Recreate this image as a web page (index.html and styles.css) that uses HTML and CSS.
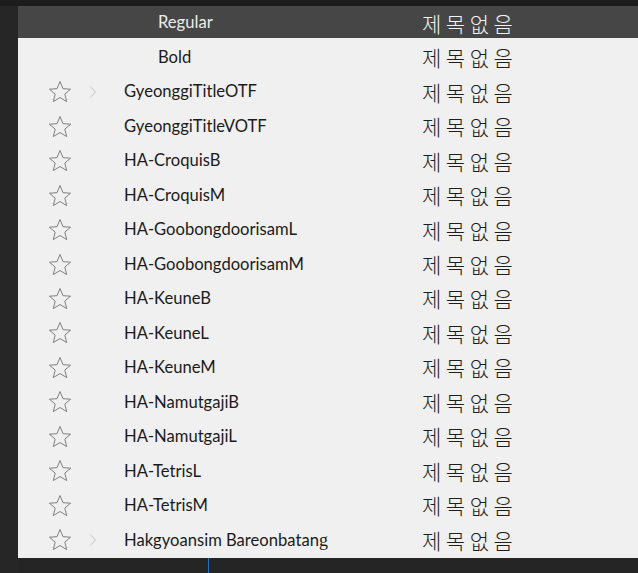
FILE: index.html
```html
<!DOCTYPE html>
<html lang="ko">
<head>
<meta charset="utf-8">
<link rel="stylesheet" href="styles.css">
</head>
<body>
<div class="frame">
  <div class="panel">
    <div class="row row-active">
      <span></span><span></span><span></span><span></span><span></span>
      <span class="name sub">Regular</span><span class="ko">제목없음</span>
    </div>
    <div class="row">
      <span></span><span></span><span></span><span></span><span></span>
      <span class="name sub">Bold</span><span class="ko">제목없음</span>
    </div>
    <div class="row">
      <span></span><svg class="star" viewBox="0 0 24 24"><path d="M12 1.5l3 7.2 7.6.5-5.8 4.9 1.9 7.5L12 17.5l-6.7 4.1 1.9-7.5-5.8-4.9 7.6-.5z"/></svg><span></span><svg class="chev" viewBox="0 0 6 12"><polyline points="0.5,0.5 5.5,6 0.5,11.5"/></svg><span></span>
      <span class="name">GyeonggiTitleOTF</span><span class="ko">제목없음</span>
    </div>
    <div class="row">
      <span></span><svg class="star" viewBox="0 0 24 24"><path d="M12 1.5l3 7.2 7.6.5-5.8 4.9 1.9 7.5L12 17.5l-6.7 4.1 1.9-7.5-5.8-4.9 7.6-.5z"/></svg><span></span><span></span><span></span>
      <span class="name">GyeonggiTitleVOTF</span><span class="ko">제목없음</span>
    </div>
    <div class="row">
      <span></span><svg class="star" viewBox="0 0 24 24"><path d="M12 1.5l3 7.2 7.6.5-5.8 4.9 1.9 7.5L12 17.5l-6.7 4.1 1.9-7.5-5.8-4.9 7.6-.5z"/></svg><span></span><span></span><span></span>
      <span class="name">HA-CroquisB</span><span class="ko">제목없음</span>
    </div>
    <div class="row">
      <span></span><svg class="star" viewBox="0 0 24 24"><path d="M12 1.5l3 7.2 7.6.5-5.8 4.9 1.9 7.5L12 17.5l-6.7 4.1 1.9-7.5-5.8-4.9 7.6-.5z"/></svg><span></span><span></span><span></span>
      <span class="name">HA-CroquisM</span><span class="ko">제목없음</span>
    </div>
    <div class="row">
      <span></span><svg class="star" viewBox="0 0 24 24"><path d="M12 1.5l3 7.2 7.6.5-5.8 4.9 1.9 7.5L12 17.5l-6.7 4.1 1.9-7.5-5.8-4.9 7.6-.5z"/></svg><span></span><span></span><span></span>
      <span class="name">HA-GoobongdoorisamL</span><span class="ko">제목없음</span>
    </div>
    <div class="row">
      <span></span><svg class="star" viewBox="0 0 24 24"><path d="M12 1.5l3 7.2 7.6.5-5.8 4.9 1.9 7.5L12 17.5l-6.7 4.1 1.9-7.5-5.8-4.9 7.6-.5z"/></svg><span></span><span></span><span></span>
      <span class="name">HA-GoobongdoorisamM</span><span class="ko">제목없음</span>
    </div>
    <div class="row">
      <span></span><svg class="star" viewBox="0 0 24 24"><path d="M12 1.5l3 7.2 7.6.5-5.8 4.9 1.9 7.5L12 17.5l-6.7 4.1 1.9-7.5-5.8-4.9 7.6-.5z"/></svg><span></span><span></span><span></span>
      <span class="name">HA-KeuneB</span><span class="ko">제목없음</span>
    </div>
    <div class="row">
      <span></span><svg class="star" viewBox="0 0 24 24"><path d="M12 1.5l3 7.2 7.6.5-5.8 4.9 1.9 7.5L12 17.5l-6.7 4.1 1.9-7.5-5.8-4.9 7.6-.5z"/></svg><span></span><span></span><span></span>
      <span class="name">HA-KeuneL</span><span class="ko">제목없음</span>
    </div>
    <div class="row">
      <span></span><svg class="star" viewBox="0 0 24 24"><path d="M12 1.5l3 7.2 7.6.5-5.8 4.9 1.9 7.5L12 17.5l-6.7 4.1 1.9-7.5-5.8-4.9 7.6-.5z"/></svg><span></span><span></span><span></span>
      <span class="name">HA-KeuneM</span><span class="ko">제목없음</span>
    </div>
    <div class="row">
      <span></span><svg class="star" viewBox="0 0 24 24"><path d="M12 1.5l3 7.2 7.6.5-5.8 4.9 1.9 7.5L12 17.5l-6.7 4.1 1.9-7.5-5.8-4.9 7.6-.5z"/></svg><span></span><span></span><span></span>
      <span class="name">HA-NamutgajiB</span><span class="ko">제목없음</span>
    </div>
    <div class="row">
      <span></span><svg class="star" viewBox="0 0 24 24"><path d="M12 1.5l3 7.2 7.6.5-5.8 4.9 1.9 7.5L12 17.5l-6.7 4.1 1.9-7.5-5.8-4.9 7.6-.5z"/></svg><span></span><span></span><span></span>
      <span class="name">HA-NamutgajiL</span><span class="ko">제목없음</span>
    </div>
    <div class="row">
      <span></span><svg class="star" viewBox="0 0 24 24"><path d="M12 1.5l3 7.2 7.6.5-5.8 4.9 1.9 7.5L12 17.5l-6.7 4.1 1.9-7.5-5.8-4.9 7.6-.5z"/></svg><span></span><span></span><span></span>
      <span class="name">HA-TetrisL</span><span class="ko">제목없음</span>
    </div>
    <div class="row">
      <span></span><svg class="star" viewBox="0 0 24 24"><path d="M12 1.5l3 7.2 7.6.5-5.8 4.9 1.9 7.5L12 17.5l-6.7 4.1 1.9-7.5-5.8-4.9 7.6-.5z"/></svg><span></span><span></span><span></span>
      <span class="name">HA-TetrisM</span><span class="ko">제목없음</span>
    </div>
    <div class="row">
      <span></span><svg class="star" viewBox="0 0 24 24"><path d="M12 1.5l3 7.2 7.6.5-5.8 4.9 1.9 7.5L12 17.5l-6.7 4.1 1.9-7.5-5.8-4.9 7.6-.5z"/></svg><span></span><svg class="chev" viewBox="0 0 6 12"><polyline points="0.5,0.5 5.5,6 0.5,11.5"/></svg><span></span>
      <span class="name">Hakgyoansim Bareonbatan<span class="serif">g</span></span><span class="ko">제목없음</span>
    </div>
  </div>
  <div class="footer"><span class="cursor"></span></div>
</div>
</body>
</html>
```
FILE: styles.css
```css
html, body {
  margin: 0;
  padding: 0;
  background: #1f1f1f;
  height: 100%;
  overflow: hidden;
}
.frame {
  padding-top: 6px;
  padding-left: 18px;
  background: #262626;
  box-shadow: inset 0 6px 0 #1c1c1c;
  height: 573px;
  box-sizing: border-box;
}
.panel {
  background: #f0f0f0;
  display: flex;
  flex-direction: column;
}
.row {
  height: 34.47px;
  display: grid;
  grid-template-columns: 30px 24px 18px 6px 28px 298px 1fr;
  align-items: center;
  font-family: "Lato", "Open Sans", sans-serif;
  font-size: 16.6px;
  color: #1b1b1b;
}
.row-active {
  background: linear-gradient(#464646 0 32px, #f0f0f0 32px);
  color: #ececec;
}
.row-active .ko { color: #f2f2f2; }
.name {
  white-space: nowrap;
  line-height: 1;
  padding-bottom: 1px;
}
.name.sub { padding-left: 34px; }
.serif { font-family: "Liberation Serif", serif; font-size: 18px; }
.ko {
  font-family: "Noto Sans CJK KR", sans-serif;
  font-weight: 300;
  font-size: 21px;
  letter-spacing: 4.5px;
  line-height: 1;
  color: #1e1e1e;
  white-space: nowrap;
}
.star {
  width: 24px;
  height: 24px;
  fill: none;
  stroke: #808080;
  stroke-width: 1;
  stroke-linejoin: miter;
}
.chev {
  width: 6px;
  height: 12px;
  fill: none;
  stroke: #c4c4c4;
  stroke-width: 1;
}
.footer {
  height: 15px;
  position: relative;
  background: #252525;
}
.cursor {
  position: absolute;
  left: 190px;
  top: 0;
  width: 1px;
  height: 15px;
  background: #2f6fbf;
}
```
